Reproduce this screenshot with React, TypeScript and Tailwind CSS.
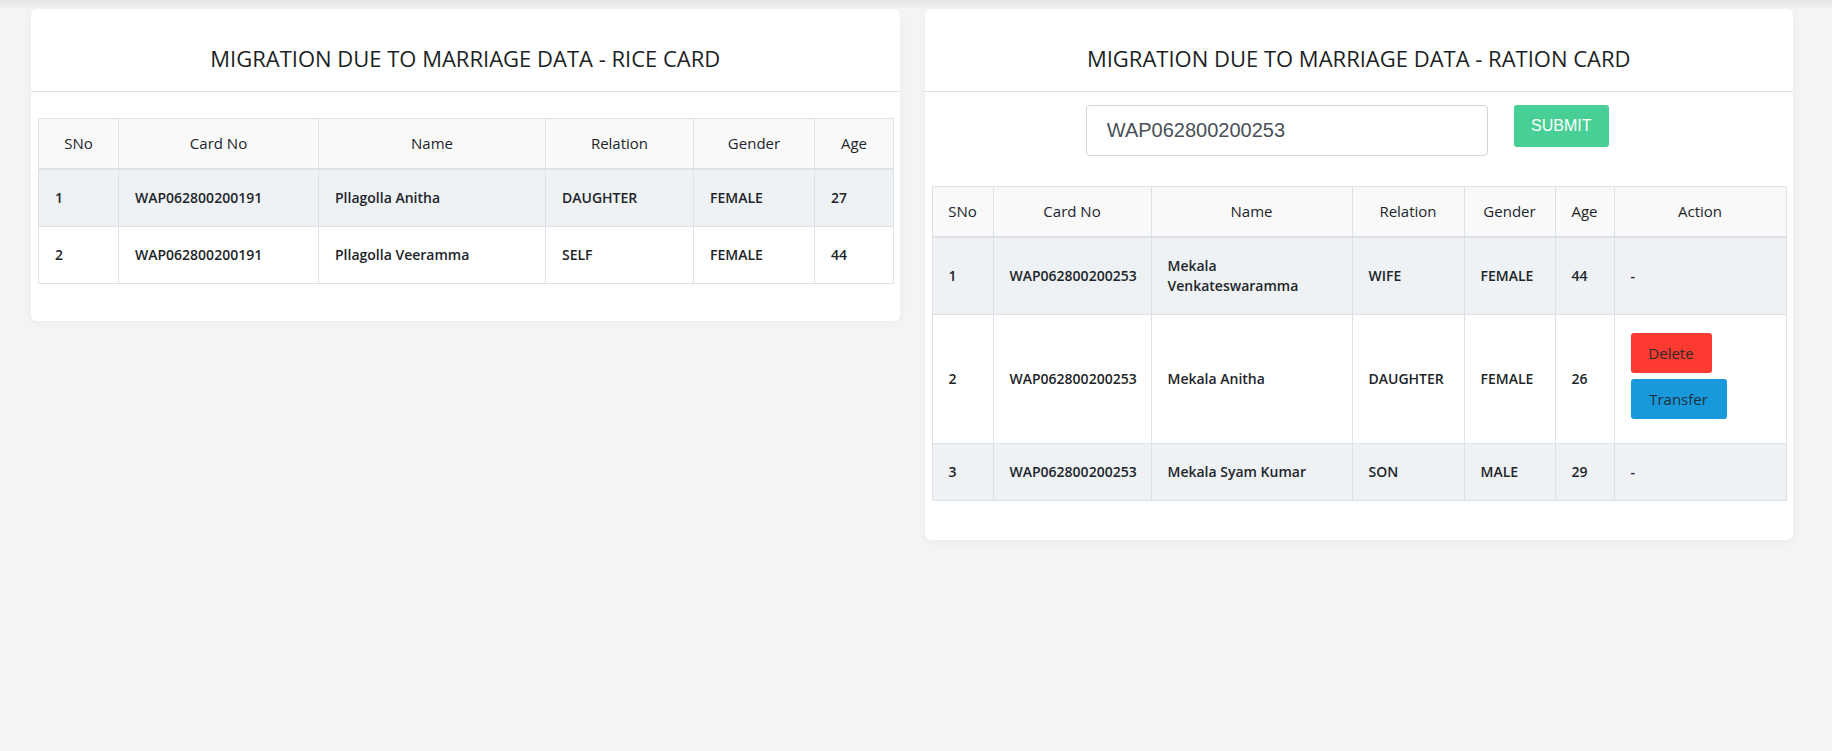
import React from 'react';

type Member = {
  sno: number;
  cardNo: string;
  name: string;
  relation: string;
  gender: string;
  age: number;
};

const riceRows: Member[] = [
  { sno: 1, cardNo: 'WAP062800200191', name: 'Pllagolla Anitha', relation: 'DAUGHTER', gender: 'FEMALE', age: 27 },
  { sno: 2, cardNo: 'WAP062800200191', name: 'Pllagolla Veeramma', relation: 'SELF', gender: 'FEMALE', age: 44 },
];

const rationRows: Member[] = [
  { sno: 1, cardNo: 'WAP062800200253', name: 'Mekala Venkateswaramma', relation: 'WIFE', gender: 'FEMALE', age: 44 },
  { sno: 2, cardNo: 'WAP062800200253', name: 'Mekala Anitha', relation: 'DAUGHTER', gender: 'FEMALE', age: 26 },
  { sno: 3, cardNo: 'WAP062800200253', name: 'Mekala Syam Kumar', relation: 'SON', gender: 'MALE', age: 29 },
];

const th = 'border border-[#dee2e6] border-b-2 px-[8px] py-[14px] text-center text-[15px] font-medium leading-[21px]';
const td = 'border border-[#dee2e6] px-[16px] py-[18px] text-left align-middle leading-[20px]';

const CardHeader: React.FC<{ title: string }> = ({ title }) => (
  <div className="border-b border-[#dee2e6] pt-[37px] pb-[20px] text-center">
    <h2 className="text-[22px] leading-[25px] font-medium text-[#1c1f23]">{title}</h2>
  </div>
);

const RiceTable: React.FC = () => (
  <table className="w-full table-fixed border-collapse text-[14px] text-[#212529]">
    <colgroup>
      <col className="w-[80px]" />
      <col className="w-[200px]" />
      <col className="w-[227px]" />
      <col className="w-[148px]" />
      <col className="w-[121px]" />
      <col className="w-[79px]" />
    </colgroup>
    <thead className="bg-[#f9f9f9]">
      <tr>
        <th className={th}>SNo</th>
        <th className={th}>Card No</th>
        <th className={th}>Name</th>
        <th className={th}>Relation</th>
        <th className={th}>Gender</th>
        <th className={th}>Age</th>
      </tr>
    </thead>
    <tbody className="font-semibold">
      {riceRows.map((r, i) => (
        <tr key={r.sno} className={i % 2 === 0 ? 'bg-[#eff2f5]' : 'bg-white'}>
          <td className={td}>{r.sno}</td>
          <td className={td}>{r.cardNo}</td>
          <td className={td}>{r.name}</td>
          <td className={td}>{r.relation}</td>
          <td className={td}>{r.gender}</td>
          <td className={td}>{r.age}</td>
        </tr>
      ))}
    </tbody>
  </table>
);

const RationTable: React.FC = () => (
  <table className="w-full table-fixed border-collapse text-[14px] text-[#212529]">
    <colgroup>
      <col className="w-[61px]" />
      <col className="w-[158px]" />
      <col className="w-[201px]" />
      <col className="w-[112px]" />
      <col className="w-[91px]" />
      <col className="w-[59px]" />
      <col className="w-[172px]" />
    </colgroup>
    <thead className="bg-[#f9f9f9]">
      <tr>
        <th className={th}>SNo</th>
        <th className={th}>Card No</th>
        <th className={th}>Name</th>
        <th className={th}>Relation</th>
        <th className={th}>Gender</th>
        <th className={th}>Age</th>
        <th className={th}>Action</th>
      </tr>
    </thead>
    <tbody className="font-semibold">
      {rationRows.map((r, i) => (
        <tr key={r.sno} className={i % 2 === 0 ? 'bg-[#eff2f5]' : 'bg-white'}>
          <td className={td}>{r.sno}</td>
          <td className={td}>{r.cardNo}</td>
          <td className={td}>
            <span className="block max-w-[150px]">{r.name}</span>
          </td>
          <td className={td}>{r.relation}</td>
          <td className={td}>{r.gender}</td>
          <td className={td}>{r.age}</td>
          <td className={td}>
            {r.sno === 2 ? (
              <div className="flex flex-col items-start font-normal">
                <button className="mb-[6px] h-[40px] w-[81px] rounded-[3px] bg-[#fd3a31] text-[15px] text-[#2b2b2b]">
                  Delete
                </button>
                <button className="mb-[6px] h-[40px] w-[96px] rounded-[3px] bg-[#1799dc] text-[15px] text-[#1f2f3a]">
                  Transfer
                </button>
              </div>
            ) : (
              '-'
            )}
          </td>
        </tr>
      ))}
    </tbody>
  </table>
);

export default function App() {
  return (
    <div className="relative min-h-[751px] w-full bg-[#f4f4f4] [font-family:'Open_Sans','Noto_Sans',sans-serif]">
      <div className="pointer-events-none absolute inset-x-0 top-0 h-[9px] bg-gradient-to-b from-[#e4e4e4] to-[#f4f4f4]" />
      <div className="relative grid grid-cols-2 items-start gap-[25px] pt-[9px] pl-[31px] pr-[39px]">
        <div className="rounded-[6px] bg-white shadow-[0_2px_10px_rgba(0,0,0,0.04)]">
          <CardHeader title="MIGRATION DUE TO MARRIAGE DATA - RICE CARD" />
          <div className="px-[7px] pt-[26px] pb-[37px]">
            <RiceTable />
          </div>
        </div>

        <div className="rounded-[6px] bg-white shadow-[0_2px_10px_rgba(0,0,0,0.04)]">
          <CardHeader title="MIGRATION DUE TO MARRIAGE DATA - RATION CARD" />
          <div className="px-[7px] pt-[13px] pb-[39px]">
            <div className="flex items-start justify-center gap-[26px] pr-[23px]">
              <input
                readOnly
                value="WAP062800200253"
                className="h-[51px] w-[402px] rounded-[4px] border border-[#ced4da] bg-white px-[20px] text-[20px] text-[#495057] outline-none [font-family:'Liberation_Sans',Arial,sans-serif]"
              />
              <button className="h-[42px] w-[95px] rounded-[3px] bg-[#48cf95] text-[16px] text-white [font-family:'Liberation_Sans',Arial,sans-serif]">
                SUBMIT
              </button>
            </div>
            <div className="mt-[30px]">
              <RationTable />
            </div>
          </div>
        </div>
      </div>
    </div>
  );
}
